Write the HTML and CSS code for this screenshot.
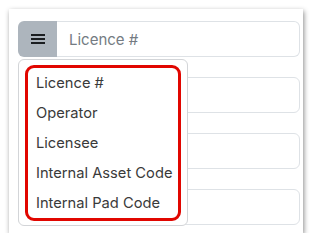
FILE: index.html
```html
<!DOCTYPE html>
<html lang="en">
<head>
    <meta charset="UTF-8">
    <meta name="viewport" content="width=device-width, initial-scale=1.0">
    <title>Search Fields</title>
    <link rel="stylesheet" href="styles.css">
</head>
<body>
    <div class="card">
        <div class="field">
            <div class="input-group">
                <button class="menu-button" type="button" aria-label="Choose field">
                    <svg width="14" height="12" viewBox="0 0 14 12">
                        <rect x="0" y="1" width="14" height="2" fill="#1b1e21"/>
                        <rect x="0" y="5" width="14" height="2" fill="#1b1e21"/>
                        <rect x="0" y="9" width="14" height="2" fill="#1b1e21"/>
                    </svg>
                </button>
                <input class="group-input" type="text" placeholder="Licence #">
            </div>
            <div class="dropdown">
                <ul class="options">
                    <li class="option">Licence #</li>
                    <li class="option">Operator</li>
                    <li class="option">Licensee</li>
                    <li class="option">Internal Asset Code</li>
                    <li class="option">Internal Pad Code</li>
                </ul>
            </div>
        </div>
        <input class="text-input" type="text">
        <input class="text-input" type="text">
        <input class="text-input" type="text">
    </div>
</body>
</html>
```

FILE: styles.css
```css
* {
    margin: 0;
    padding: 0;
    box-sizing: border-box;
}

body {
    background-color: #fff;
    font-family: Inter, "Noto Sans", sans-serif;
    color: #212529;
}

.card {
    margin: 9px 0 0 9px;
    width: 294px;
    height: 224px;
    padding: 12px 0 0 9px;
    background-color: #fff;
    box-shadow: 1px 2px 5px rgba(0, 0, 0, 0.45);
    display: flex;
    flex-direction: column;
    gap: 20px;
}

.field {
    position: relative;
    width: 282px;
}

.input-group {
    display: flex;
    height: 36px;
}

.menu-button {
    width: 39px;
    background-color: #adb5bd;
    border: none;
    border-radius: 6px 0 0 6px;
    display: flex;
    align-items: center;
    justify-content: center;
}

.group-input,
.text-input {
    font-family: inherit;
    font-size: 15px;
    color: #212529;
    border: 1px solid #dee2e6;
    background-color: #fff;
    outline: none;
}

.group-input {
    flex: 1;
    min-width: 0;
    padding: 0 12px;
    border-left: none;
    border-radius: 0 6px 6px 0;
}

.group-input::placeholder {
    color: #747b82;
}

.text-input {
    width: 282px;
    height: 36px;
    border-radius: 6px;
}

.dropdown {
    position: absolute;
    top: 38px;
    left: 0;
    width: 170px;
    padding: 5px 6px 4px 6px;
    background-color: #fff;
    border: 1px solid #d3d5d8;
    border-radius: 6px;
    z-index: 10;
}

.options {
    list-style: none;
    border: 3px solid #e10600;
    border-radius: 9px;
}

.option {
    height: 30px;
    line-height: 30px;
    padding-left: 8px;
    font-size: 14.7px;
    color: #3a3a3a;
    white-space: nowrap;
}
```
